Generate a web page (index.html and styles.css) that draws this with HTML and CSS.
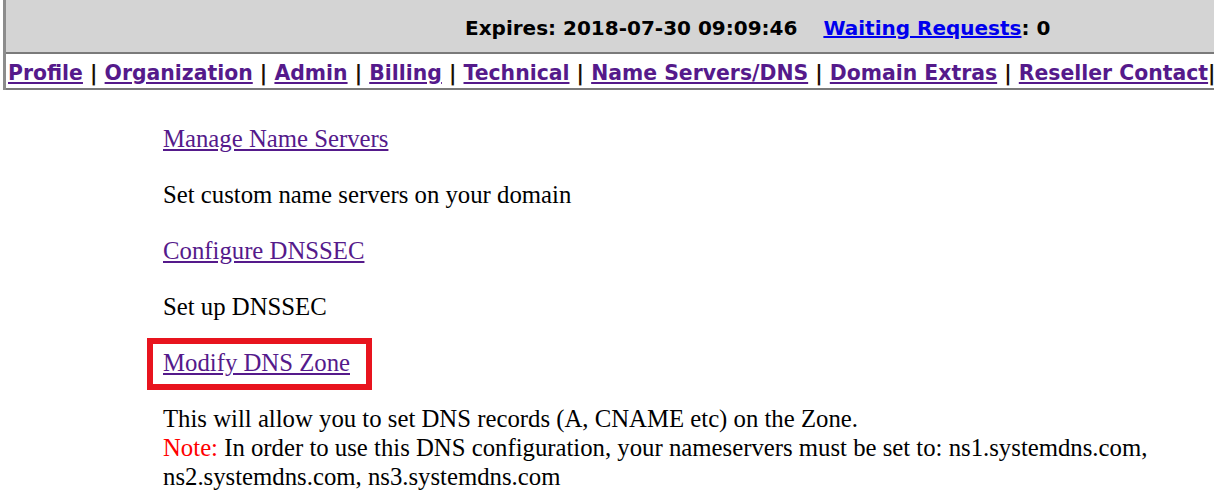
FILE: index.html
```html
<!DOCTYPE html>
<html>
<head>
<meta charset="utf-8">
<link rel="stylesheet" href="styles.css">
</head>
<body>
<div class="frame">
  <div class="status">
    <span class="exp">Expires: 2018-07-30 09:09:46</span>
    <span class="wait"><a href="#" class="blue">Waiting Requests</a>: 0</span>
  </div>
  <div class="nav">
    <a href="#">Profile</a> | <a href="#">Organization</a> | <a href="#">Admin</a> | <a href="#">Billing</a> | <a href="#">Technical</a> | <a href="#">Name Servers/DNS</a> | <a href="#">Domain Extras</a> | <a href="#">Reseller Contact</a>|
  </div>
</div>
<div class="content">
  <p class="item"><a href="#">Manage Name Servers</a></p>
  <p class="item">Set custom name servers on your domain</p>
  <p class="item"><a href="#">Configure DNSSEC</a></p>
  <p class="item">Set up DNSSEC</p>
  <p class="item boxed"><span class="hl"><a href="#">Modify DNS Zone</a></span></p>
  <p class="desc">This will allow you to set DNS records (A, CNAME etc) on the Zone.<br><span class="note">Note:</span> In order to use this DNS configuration, your nameservers must be set to: ns1.systemdns.com, ns2.systemdns.com, ns3.systemdns.com</p>
</div>
</body>
</html>
```
FILE: styles.css
```css
html, body {
  margin: 0;
  padding: 0;
  background: #fff;
}
body {
  font-family: "Liberation Serif", "Times New Roman", serif;
  color: #000;
  overflow: hidden;
}
.frame {
  margin-left: 3px;
  border-left: 3px solid #8c8c8c;
}
.status {
  background: #d4d4d4;
  height: 54px;
  box-sizing: border-box;
  padding: 16px 0 0 459px;
  font-family: "DejaVu Sans", Verdana, sans-serif;
  font-weight: bold;
  font-size: 20px;
  line-height: 24px;
  white-space: nowrap;
  border-bottom: 2px solid #7a7a7a;
}
.exp { margin-right: 19px; }
.blue { color: #0000ee; text-decoration: underline; }
.nav {
  height: 36px;
  box-sizing: border-box;
  padding: 7px 0 0 2px;
  font-family: "DejaVu Sans", Verdana, sans-serif;
  font-weight: bold;
  font-size: 20.4px;
  line-height: 24px;
  white-space: nowrap;
  border-bottom: 2px solid #7a7a7a;
  color: #1a0d00;
}
.nav a, .content a {
  color: #551a8b;
  text-decoration: underline;
}
.content {
  padding: 35px 40px 0 163px;
  font-size: 24.75px;
}
.item {
  margin: 0 0 29px 0;
  line-height: 27px;
}
.boxed {
  margin: -11px 0 14px -16px;
}
.hl {
  display: inline-block;
  border: 6px solid #e8141e;
  padding: 5px 16px 8px 10px;
}
.desc {
  margin: 0;
  line-height: 29px;
}
.note { color: #ff0000; }
```
